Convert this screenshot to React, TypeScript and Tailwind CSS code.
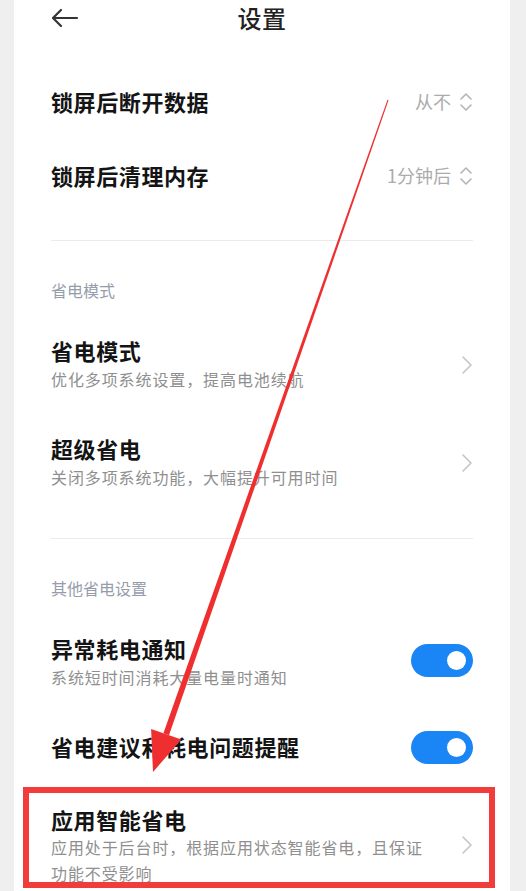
import React from 'react';

const font = { fontFamily: '"Noto Sans CJK SC", "Noto Sans", sans-serif' };

function Chevron() {
  return (
    <svg width="12" height="20" viewBox="0 0 12 20" fill="none" className="shrink-0">
      <path d="M2 2 L10 10 L2 18" stroke="#c4c4c4" strokeWidth="1.6" strokeLinecap="round" strokeLinejoin="round" />
    </svg>
  );
}

function UpDown() {
  return (
    <svg width="14" height="22" viewBox="0 0 14 22" fill="none" className="shrink-0">
      <path d="M2 8 L7 3 L12 8" stroke="#b4b4b4" strokeWidth="1.6" strokeLinecap="round" strokeLinejoin="round" />
      <path d="M2 14 L7 19 L12 14" stroke="#b4b4b4" strokeWidth="1.6" strokeLinecap="round" strokeLinejoin="round" />
    </svg>
  );
}

function Toggle() {
  return (
    <div className="w-[62px] h-[33px] rounded-full bg-[#1a85f5] flex items-center justify-end pr-[7px] shrink-0">
      <div className="w-[19px] h-[19px] rounded-full bg-white" />
    </div>
  );
}

function SelectRow({ title, value }: { title: string; value: string }) {
  return (
    <div className="h-[74px] flex items-center justify-between">
      <span className="text-[22px] leading-[30px] font-semibold text-[#141414] tracking-[0.6px] -mt-[4px]">{title}</span>
      <div className="flex items-center gap-[8px] -mt-[2px]">
        <span className="text-[18px] text-[#ababab] -mt-[2px]">{value}</span>
        <UpDown />
      </div>
    </div>
  );
}

function NavRow({ title, desc }: { title: string; desc: string }) {
  return (
    <div className="h-[98px] flex items-center justify-between">
      <div className="flex flex-col gap-[2px] -mt-[5px]">
        <span className="text-[22px] leading-[30px] font-semibold text-[#141414] tracking-[0.6px]">{title}</span>
        <span className="text-[16px] leading-[24px] text-[#8f8f8f] tracking-[0.9px]">{desc}</span>
      </div>
      <Chevron />
    </div>
  );
}

function SectionLabel({ text }: { text: string }) {
  return (
    <div className="pt-[39px] pb-[16px]">
      <span className="block text-[16px] leading-[20px] text-[#959cac]">{text}</span>
    </div>
  );
}

export default function App() {
  return (
    <div className="relative w-[526px] h-[891px] bg-[#efefef] overflow-hidden" style={font}>
      <div className="ml-[14px] mr-[16px] h-full bg-white px-[37px]">
        {/* header */}
        <div className="relative h-[35px] flex items-center justify-center">
          <svg width="28" height="20" viewBox="0 0 28 20" fill="none" className="absolute left-[0px] top-[8px]">
            <path d="M26 10 H3 M10 2 L2 10 L10 18" stroke="#333" strokeWidth="2.2" strokeLinecap="round" strokeLinejoin="round" />
          </svg>
          <span className="text-[24px] text-[#222] font-medium tracking-[0.5px]">设置</span>
        </div>

        <div className="pt-[31px]">
          <SelectRow title="锁屏后断开数据" value="从不" />
          <SelectRow title="锁屏后清理内存" value="1分钟后" />
        </div>

        <div className="h-[26px]" />
        <div className="h-px bg-[#ebebeb]" />

        <SectionLabel text="省电模式" />
        <NavRow title="省电模式" desc="优化多项系统设置，提高电池续航" />
        <NavRow title="超级省电" desc="关闭多项系统功能，大幅提升可用时间" />

        <div className="h-[26px]" />
        <div className="h-px bg-[#ebebeb]" />

        <SectionLabel text="其他省电设置" />
        <div className="h-[98px] flex items-center justify-between">
          <div className="flex flex-col gap-[2px] -mt-[5px]">
            <span className="text-[22px] leading-[30px] font-semibold text-[#141414] tracking-[0.6px]">异常耗电通知</span>
            <span className="text-[16px] leading-[24px] text-[#8f8f8f] tracking-[0.9px]">系统短时间消耗大量电量时通知</span>
          </div>
          <div className="-mt-[5px]">
            <Toggle />
          </div>
        </div>
        <div className="h-[70px] flex items-center justify-between">
          <span className="text-[22px] leading-[30px] font-semibold text-[#141414] tracking-[0.6px] -mt-[3px]">省电建议和耗电问题提醒</span>
          <Toggle />
        </div>

        <div className="pt-[22px] flex items-center justify-between">
          <div className="flex flex-col">
            <span className="text-[22px] leading-[30px] font-semibold text-[#141414] tracking-[0.6px]">应用智能省电</span>
            <span className="text-[16px] leading-[26px] text-[#8f8f8f] tracking-[0.9px] w-[378px]">
              应用处于后台时，根据应用状态智能省电，且保证功能不受影响
            </span>
          </div>
          <Chevron />
        </div>
      </div>

      {/* annotation: red highlight box */}
      <div className="absolute left-[23px] top-[787px] w-[472px] h-[101px] border-[6px] border-[#f23b3b]" />

      {/* annotation: red arrow */}
      <svg className="absolute inset-0 pointer-events-none" width="526" height="891" viewBox="0 0 526 891">
        <polygon points="388.5,100.2 387.5,99.8 163.4,733.2 169.0,735.2" fill="#ef2f2f" />
        <polygon points="153,772 151.1,728.9 181.3,739.5" fill="#ef2f2f" />
      </svg>
    </div>
  );
}
